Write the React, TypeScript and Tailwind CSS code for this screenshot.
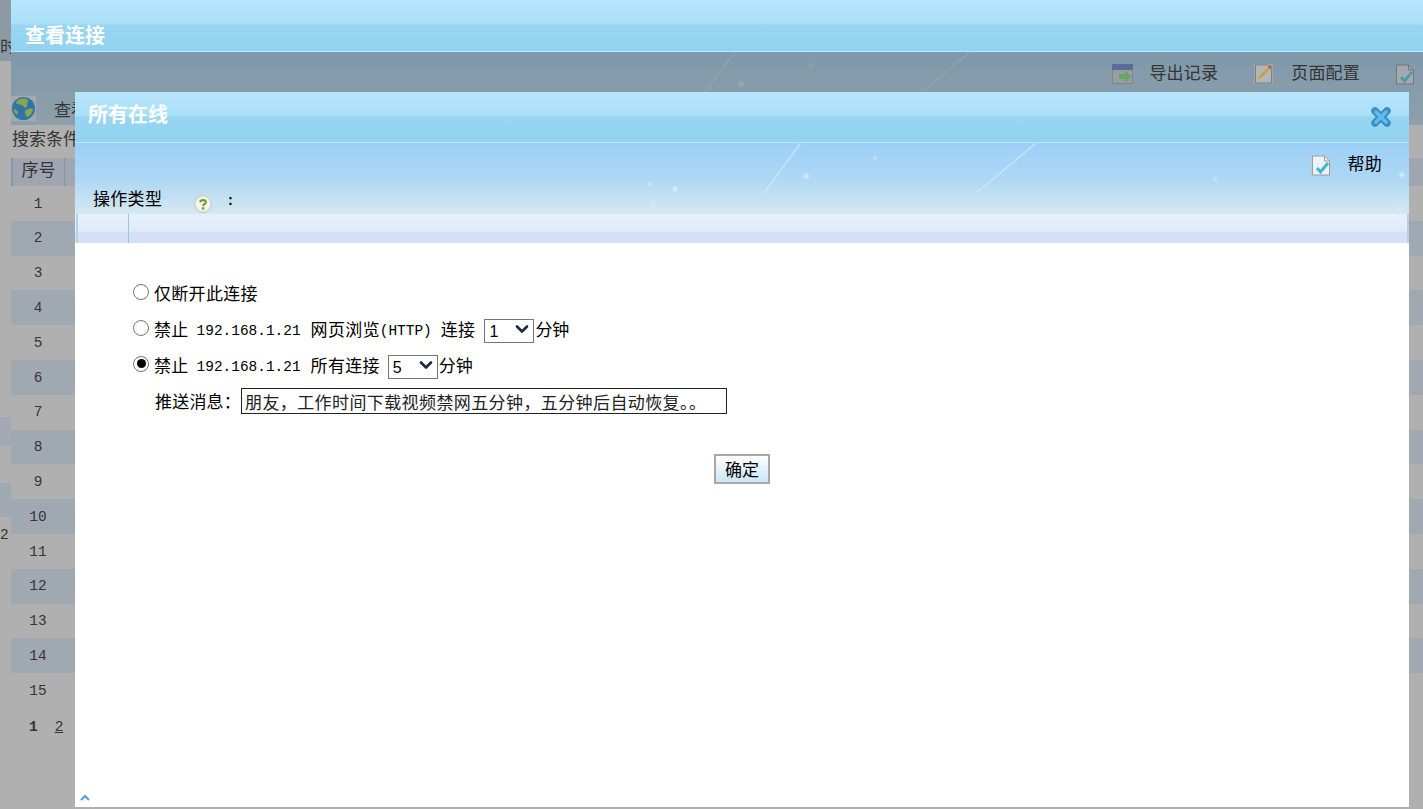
import React from "react";
import { ChevronDown } from "lucide-react";

const rows = [1, 2, 3, 4, 5, 6, 7, 8, 9, 10, 11, 12, 13, 14, 15];

const ExportIcon = () => (
  <svg width="21" height="20" viewBox="0 0 21 20" className="shrink-0">
    <rect x="0.5" y="0.5" width="20" height="19" fill="#9a9ea2" stroke="#80868c" />
    <rect x="0" y="0" width="21" height="6" fill="#5a6c9a" />
    <path d="M7 10h6V6.5l7 6-7 6V15H7z" fill="#66a868" />
  </svg>
);

const EditIcon = () => (
  <svg width="19" height="20" viewBox="0 0 19 20" className="shrink-0">
    <rect width="19" height="20" fill="#a3a5a6" />
    <path d="M1.5 1h12l4 4v14h-16z" fill="#b4b6b8" stroke="#7d7f82" />
    <path d="M4 16l2-5 8-8 2 2-8 8z" fill="#c4a03e" />
    <path d="M14 3l2-2 2 2-2 2z" fill="#b8575a" />
  </svg>
);

const CheckDocIcon = ({ dim }: { dim?: boolean }) => (
  <svg width="20" height="21" viewBox="0 0 20 21" className="shrink-0">
    <rect width="20" height="21" fill={dim ? "#8a9aa8" : "#b6cddd"} />
    <path d="M1.5 1h12l5 5v14h-17z" fill={dim ? "#a3a9ae" : "#edf2f6"} stroke={dim ? "#70767c" : "#9a9ea2"} />
    <path d="M13.5 1v5h5" fill="none" stroke={dim ? "#70767c" : "#9a9ea2"} />
    <path d="M6 13l3.5 4L17 8" fill="none" stroke={dim ? "#4f9ca6" : "#45b5cd"} strokeWidth="3" />
  </svg>
);

const HelpIcon = () => (
  <svg width="18" height="18" viewBox="0 0 18 18" className="shrink-0">
    <circle cx="9" cy="9" r="8.5" fill="#e8ebe6" stroke="#c4c8c6" />
    <circle cx="9" cy="9" r="6.5" fill="#f6f7f3" />
    <path d="M6.3 7.2C6.4 4.4 11.8 4.4 11.8 7.2c0 2-2.7 1.9-2.7 3.9" fill="none" stroke="#6fa01f" strokeWidth="2.2" />
    <rect x="7.9" y="12.2" width="2.4" height="2.4" fill="#6fa01f" />
  </svg>
);

const CloseIcon = () => (
  <svg width="22" height="22" viewBox="0 0 22 22" className="blur-[0.4px]">
    <path d="M5 5l12 12M17 5L5 17" stroke="#3a8fc6" strokeWidth="7.5" strokeLinecap="round" />
    <path d="M6 6l10 10M16 6L6 16" stroke="#64bbea" strokeWidth="3.5" strokeLinecap="round" />
  </svg>
);

const EarthIcon = () => (
  <svg width="25" height="25" viewBox="0 0 25 25" className="shrink-0">
    <rect width="25" height="25" fill="#a4a9ab" />
    <circle cx="12.5" cy="12.5" r="11.5" fill="#2f76a6" />
    <path d="M7 4c3-2 8-2 10 0 1 2-2 3-1 5 1 3-3 3-4 1S8 9 6 8s0-3 1-4zM14 15c2-2 6-3 8-2-.5 4-3 7-6 8-1-2-3-4-2-6zM3 13c2 0 4 2 4 4l-1 2c-2-1-3-4-3-6z" fill="#8aa552" />
  </svg>
);

// streaks and sparkles painted into the sky background
const Sky = ({ dim }: { dim?: boolean }) => (
  <svg className="absolute inset-0 h-full w-full" aria-hidden="true">
    {dim ? (
      <g>
        <path d="M694 40L724 0M912 40L959 0" stroke="#93a6b2" strokeWidth="1.5" opacity="0.7" />
        <circle cx="730" cy="32" r="3" fill="#9aa8b0" className="blur-[1px]" />
        <circle cx="800" cy="14" r="2" fill="#95a5af" className="blur-[1px]" />
      </g>
    ) : (
      <g fill="#e8f5fd" opacity="0.75">
        <path d="M688 51L725 1M900 51L960 1" stroke="#d3e9f8" strokeWidth="1.5" fill="none" />
        <g className="blur-[0.8px]">
          <circle cx="731" cy="33" r="2.5" />
          <circle cx="800" cy="15" r="1.5" />
          <circle cx="600" cy="46" r="2.5" />
          <circle cx="575" cy="41" r="1.5" />
          <circle cx="578" cy="62" r="1.5" />
          <circle cx="1140" cy="36" r="1.5" />
          <circle cx="1327" cy="32" r="2.5" />
          <circle cx="1325" cy="65" r="1.5" />
        </g>
      </g>
    )}
  </svg>
);

const Radio = ({ checked }: { checked?: boolean }) => (
  <span className="mb-[3px] mr-[5px] flex h-4 w-4 shrink-0 items-center justify-center rounded-full border border-[#767676] bg-white">
    {checked && <span className="h-[9px] w-[9px] rounded-full bg-black" />}
  </span>
);

const Ip = () => (
  <span className="ml-[8px] pt-[6px] font-['Liberation_Mono',monospace] text-[14.44px]">192.168.1.21</span>
);

const Minutes = ({ value }: { value: string }) => (
  <span className="relative block h-[24px] w-[50px]">
    <select
      defaultValue={value}
      className="h-full w-full appearance-none border-[1.5px] border-[#767676] bg-white pl-[4px] font-['Liberation_Sans',sans-serif] text-[16px] text-black"
    >
      <option>1</option>
      <option>5</option>
      <option>10</option>
    </select>
    <ChevronDown size={20} strokeWidth={3.2} className="pointer-events-none absolute right-[2px] top-[2px] text-[#1f2a3a]" />
  </span>
);

export default function App() {
  return (
    <div className="relative h-[809px] w-[1423px] overflow-hidden bg-[#b0b0b0] font-['Noto_Sans_CJK_SC',sans-serif] text-[17px] text-[#353535]">
      {/* left sliver of the page behind the window */}
      <div className="absolute left-0 top-0 h-[61px] w-[11px] overflow-hidden bg-[#8c9aa6]">
        <span className="absolute left-0 top-[34px] leading-[24px]">时</span>
      </div>
      <div className="absolute left-0 top-[417px] h-[29px] w-[11px] bg-[#a4a9b6]" />
      <div className="absolute left-0 top-[483px] h-[34px] w-[11px] bg-[#a0a9b1]" />
      <span className="absolute left-0 top-[525px] font-['Liberation_Mono',monospace] text-[14.44px]">2</span>

      {/* window underneath */}
      <div className="absolute bottom-0 left-[11px] right-0 top-0 flex flex-col">
        <div className="flex h-[52px] shrink-0 items-center bg-[linear-gradient(to_bottom,#b7e6fe_0,#a9dff5_24px,#97d5f2_25px,#94d3f0_51px,#c0e8fa_51px)] pl-[14px] pt-[18px] text-[20px] font-bold text-white">
          查看连接
        </div>
        <div className="relative h-[73px] shrink-0 bg-gradient-to-b from-[#7e99ab] to-[#8f9faa]">
          <Sky dim />
          <div className="relative flex h-[44px] items-center justify-end pr-[8px]">
            <ExportIcon />
            <span className="-mt-[4px] ml-[16px] mr-[36px] tracking-[0.2px]">导出记录</span>
            <EditIcon />
            <span className="-mt-[4px] ml-[18px] mr-[35px] tracking-[0.2px]">页面配置</span>
            <CheckDocIcon dim />
          </div>
          <div className="relative flex items-center">
            <EarthIcon />
            <span className="ml-[18px]">查看连接</span>
          </div>
        </div>
        <div className="mt-[1px] h-[32px] leading-[24px]">
          <span className="ml-[1px]">搜索条件：</span>
        </div>
        <div className="flex h-[28px] shrink-0 items-center bg-[#9fa5b1]">
          <span className="flex h-full w-[54px] items-center justify-center border-l-2 border-r border-l-[#8599ad] border-r-[#8496a6] pb-[7px]">
            序号
          </span>
        </div>
        {rows.map((n) => (
          <div
            key={n}
            className={`flex h-[34.8px] shrink-0 items-center ${n % 2 === 0 ? "bg-[#a0a9b1]" : ""}`}
          >
            <span className="w-[54px] pt-[2px] text-center font-['Liberation_Mono',monospace] text-[14.44px]">{n}</span>
          </div>
        ))}
        <div className="mt-[9px] flex pl-[18px] font-['Liberation_Mono',monospace] text-[14.44px]">
          <b>1</b>
          <span className="ml-[17px] underline">2</span>
        </div>
      </div>

      {/* dialog */}
      <div className="absolute bottom-[2px] left-[75px] top-[92px] flex w-[1334px] flex-col bg-white text-black">
        <div className="flex h-[51px] shrink-0 items-center justify-between bg-[linear-gradient(to_bottom,#b7e6fe_0,#a9dff5_24px,#97d5f2_25px,#94d3f0_50px,#c0e8fa_50px)] pb-[2px] pl-[13px] pr-[17px] text-[20px] font-bold text-white">
          <span className="-mt-[6px]">所有在线</span>
          <CloseIcon />
        </div>
        <div className="relative h-[71px] shrink-0 bg-gradient-to-b from-[#9ccff8] via-[#aed7f5] to-[#d5e8f0]">
          <Sky />
          <div className="relative flex h-[44px] items-center justify-end pr-[27px]">
            <CheckDocIcon />
            <span className="-mt-[4px] ml-[16px] tracking-[0.3px]">帮助</span>
          </div>
          <div className="relative flex h-[27px] items-start pl-[18px]">
            <span className="-mt-[1px] leading-[24px] tracking-[0.3px]">操作类型</span>
            <span className="ml-[32px] mt-[8px]">
              <HelpIcon />
            </span>
            <span className="ml-[14px] mt-[2px] font-['Liberation_Mono',monospace] text-[14px] font-bold leading-[24px]">:</span>
          </div>
        </div>
        <div className="flex h-[29px] shrink-0 bg-[linear-gradient(to_bottom,#e6effd_0,#e1ebfb_17px,#d4e0f6_18px,#d4e0f6_100%)]">
          <span className="ml-[1px] h-full w-[2px] bg-[#b7cfe8]" />
          <span className="ml-[50px] h-full w-[1px] bg-[#9cc5e0]" />
          <span className="ml-auto h-full w-[2px] bg-[#b7cfe8]" />
        </div>

        <div className="flex flex-1 flex-col pl-[58px] pt-[32px]">
          <label className="flex h-[36px] items-center">
            <Radio />
            <span className="tracking-[0.3px]">仅断开此连接</span>
          </label>
          <label className="flex h-[36px] items-center">
            <Radio />
            <span className="tracking-[0.3px]">禁止</span>
            <Ip />
            <span className="ml-[10px] tracking-[0.3px]">网页浏览</span>
            <span className="pt-[6px] font-['Liberation_Mono',monospace] text-[14.44px]">(HTTP)</span>
            <span className="ml-[9px] mr-[9px] tracking-[0.3px]">连接</span>
            <Minutes value="1" />
            <span className="ml-[1px]">分钟</span>
          </label>
          <label className="flex h-[36px] items-center">
            <Radio checked />
            <span className="tracking-[0.3px]">禁止</span>
            <Ip />
            <span className="ml-[10px] mr-[8px] tracking-[0.3px]">所有连接</span>
            <Minutes value="5" />
            <span className="ml-[1px]">分钟</span>
          </label>
          <div className="flex h-[36px] items-center pl-[22px]">
            <span className="tracking-[0.2px]">推送消息：</span>
            <input
              readOnly
              value="朋友，工作时间下载视频禁网五分钟，五分钟后自动恢复。。"
              className="h-[26px] w-[486px] border-[1.5px] border-[#222] bg-white pl-[3px] text-[17px] tracking-[0.4px] text-[#222] outline-none"
            />
          </div>
          <div className="mt-[35px] flex pr-[58px]">
            <button className="mx-auto h-[30px] w-[56px] border-2 border-[#a8a8a8] bg-gradient-to-b from-white to-[#c8e6fb] text-[17px] text-black">
              确定
            </button>
          </div>
        </div>

        <svg width="10" height="7" viewBox="0 0 10 7" className="absolute bottom-[6px] left-[5px]">
          <path d="M1 6l4-4 4 4" fill="none" stroke="#4aa3e0" strokeWidth="2" />
        </svg>
      </div>
    </div>
  );
}
